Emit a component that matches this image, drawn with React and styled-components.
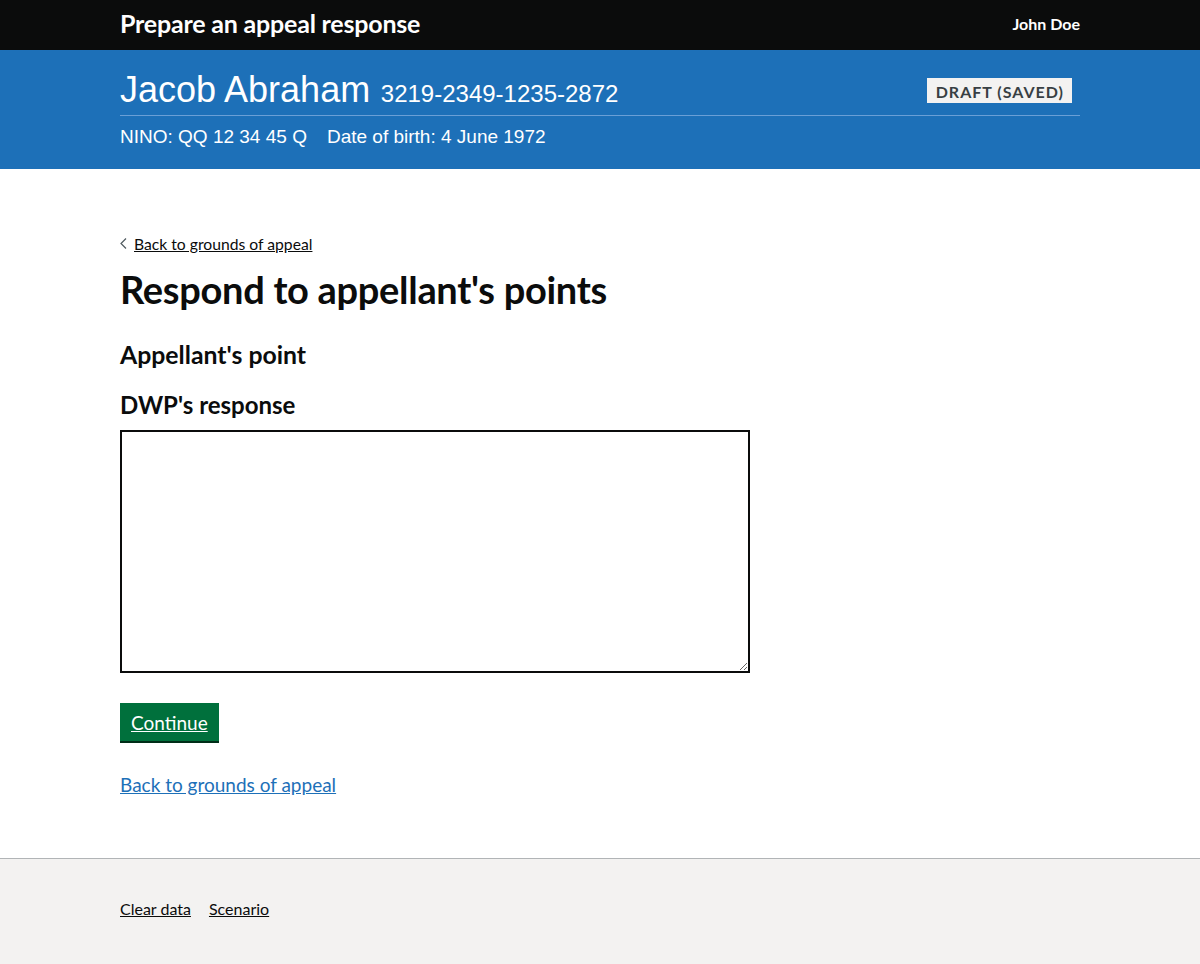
import styled, { createGlobalStyle } from 'styled-components';

const GlobalStyle = createGlobalStyle`
  body {
    margin: 0;
    background: #ffffff;
    font-family: Lato, "Noto Sans", Arial, sans-serif;
    color: #0b0c0c;
  }
`;

const Width = styled.div`
  width: 960px;
  margin: 0 auto;
`;

const TopBar = styled.header`
  background: #0b0c0c;
  height: 50px;
`;

const TopInner = styled(Width)`
  display: flex;
  align-items: center;
  justify-content: space-between;
  height: 100%;
  padding-bottom: 4px;
  box-sizing: border-box;
`;

const ServiceName = styled.div`
  color: #ffffff;
  font-weight: 700;
  font-size: 25px;
  letter-spacing: -0.2px;
`;

const UserName = styled.div`
  color: #ffffff;
  font-weight: 700;
  font-size: 16px;
`;

const Banner = styled.div`
  background: #1d70b8;
  height: 119px;
`;

const BannerInner = styled(Width)`
  padding-top: 21px;
`;

const NameRow = styled.div`
  display: flex;
  align-items: center;
  justify-content: space-between;
  border-bottom: 1px solid #6a9fd6;
  padding-bottom: 5px;
  padding-right: 8px;
  height: 39px;
`;

const Name = styled.div`
  font-family: "Liberation Sans", Arial, sans-serif;
  color: #ffffff;
  font-size: 36px;
  line-height: 40px;
  padding-top: 3px;
`;

const RefNo = styled.span`
  font-size: 24px;
  margin-left: 4px;
`;

const Tag = styled.span`
  background: #f3f2f1;
  color: #383f43;
  font-weight: 700;
  font-size: 16px;
  letter-spacing: 1px;
  padding: 4px 8px 2px 9px;
  line-height: 19px;
`;

const Details = styled.div`
  font-family: "Liberation Sans", Arial, sans-serif;
  color: #ffffff;
  font-size: 19px;
  margin-top: 10px;
  display: flex;
  gap: 20px;
`;

const Main = styled(Width)`
  padding-top: 64px;
  padding-bottom: 62px;
`;

const BackLink = styled.a`
  display: inline-flex;
  align-items: center;
  gap: 7px;
  font-size: 15.7px;
  color: #0b0c0c;
  text-decoration: underline;
  cursor: pointer;
`;

const H1 = styled.h1`
  font-size: 38px;
  font-weight: 700;
  margin: 14px 0 0;
  line-height: 44px;
  letter-spacing: -0.3px;
`;

const H2 = styled.h2`
  font-size: ${p => p.$size}px;
  font-weight: 700;
  margin: ${p => p.$top}px 0 0;
  line-height: 30px;
`;

const TextArea = styled.textarea`
  display: block;
  box-sizing: border-box;
  width: 630px;
  height: 243px;
  margin-top: 10px;
  border: 2px solid #0b0c0c;
  border-radius: 0;
  font-family: inherit;
  font-size: 19px;
  padding: 5px;
`;

const Button = styled.button`
  margin-top: 30px;
  background: #00703c;
  color: #ffffff;
  border: 0;
  box-shadow: 0 2px 0 #002d18;
  font-family: inherit;
  font-size: 19px;
  text-decoration: underline;
  padding: 8px 11px 7px;
  height: 38px;
  cursor: pointer;
`;

const BlueLink = styled.a`
  display: inline-block;
  margin-top: 32px;
  color: #1d70b8;
  font-size: 19px;
  text-decoration: underline;
  cursor: pointer;
`;

const Footer = styled.footer`
  border-top: 1px solid #b1b4b6;
  background: #f3f2f1;
  height: 105px;
`;

const FooterInner = styled(Width)`
  display: flex;
  gap: 18px;
  padding-top: 40px;
`;

const FooterLink = styled.a`
  color: #0b0c0c;
  font-size: 16px;
  text-decoration: underline;
  cursor: pointer;
`;

export default function App() {
  return (
    <>
      <GlobalStyle />
      <TopBar>
        <TopInner>
          <ServiceName>Prepare an appeal response</ServiceName>
          <UserName>John Doe</UserName>
        </TopInner>
      </TopBar>
      <Banner>
        <BannerInner>
          <NameRow>
            <Name>
              Jacob Abraham<RefNo> 3219-2349-1235-2872</RefNo>
            </Name>
            <Tag>DRAFT (SAVED)</Tag>
          </NameRow>
          <Details>
            <span>NINO: QQ 12 34 45 Q</span>
            <span>Date of birth: 4 June 1972</span>
          </Details>
        </BannerInner>
      </Banner>
      <Main>
        <BackLink>
          <svg width="7" height="11" viewBox="0 0 7 11" fill="none">
            <path d="M6 0.5L1 5.5L6 10.5" stroke="#505a5f" strokeWidth="1.2" />
          </svg>
          Back to grounds of appeal
        </BackLink>
        <H1>Respond to appellant's points</H1>
        <H2 $top={29} $size={24.8}>Appellant's point</H2>
        <H2 $top={20} $size={24}>DWP's response</H2>
        <TextArea />
        <Button>Continue</Button>
        <div>
          <BlueLink>Back to grounds of appeal</BlueLink>
        </div>
      </Main>
      <Footer>
        <FooterInner>
          <FooterLink>Clear data</FooterLink>
          <FooterLink>Scenario</FooterLink>
        </FooterInner>
      </Footer>
    </>
  );
}
